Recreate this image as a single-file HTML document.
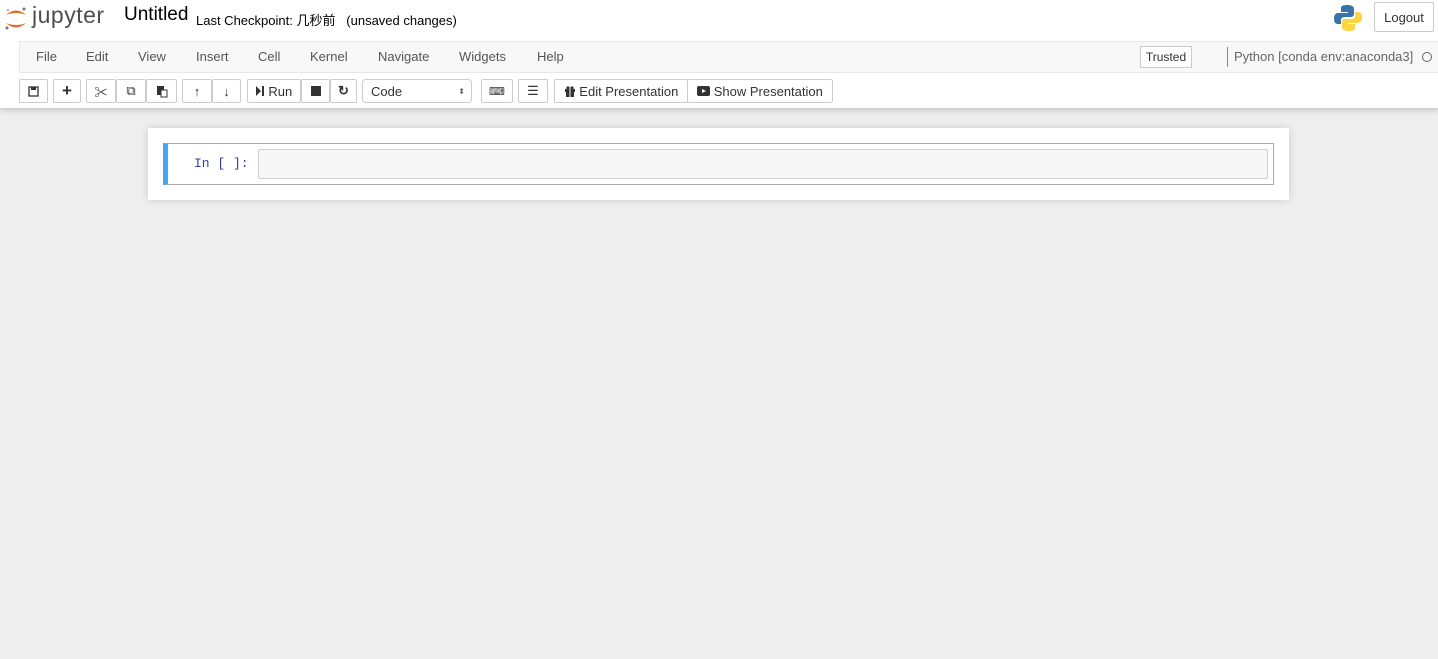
<!DOCTYPE html>
<html><head><meta charset="utf-8"><style>
*{box-sizing:border-box}
body{margin:0;width:1438px;height:659px;background:#eeeeee;font-family:"Liberation Sans","Noto Sans CJK SC",sans-serif;font-size:13px;color:#000;position:relative;overflow:hidden}
.abs{position:absolute}
#hdr{left:0;top:0;width:1438px;height:108px;background:#fff;box-shadow:0 2px 6px rgba(0,0,0,.2)}
#menu{left:19px;top:41px;width:1419px;height:32px;background:#f8f8f8;border-top:1px solid #e7e7e7;border-bottom:1px solid #e7e7e7;border-left:1px solid #e7e7e7}
.mi{position:absolute;top:7px;color:#555;font-size:13px}
.btn{position:absolute;top:79px;height:24px;border:1px solid #ccc;background:#fff;border-radius:2px;display:flex;align-items:center;justify-content:center;font-size:13px;color:#333}
</style></head><body>
<div id="hdr" class="abs"></div>
<svg class="abs" style="left:4px;top:6px" width="24" height="26" viewBox="0 0 24 26"><path d="M2 9 Q12 0 22 9 Q12 5 2 9Z" fill="#e46e2e"/><path d="M2 17 Q12 26 22 17 Q12 21 2 17Z" fill="#e46e2e"/><circle cx="20" cy="3" r="1.5" fill="#767677"/><circle cx="3" cy="22" r="1.5" fill="#767677"/><circle cx="4" cy="4" r="1" fill="#989798"/></svg>
<div class="abs" style="left:32px;top:2px;font-size:23px;color:#4e4e4e;letter-spacing:0.5px">jupyter</div>
<div class="abs" style="left:124px;top:4px;font-size:19px">Untitled</div>
<div class="abs" style="left:196px;top:10px;font-size:13px">Last Checkpoint: 几秒前 &nbsp; (unsaved changes)</div>
<svg class="abs" style="left:1333px;top:3px" width="30" height="30" viewBox="0 0 30 30"><path d="M14 2 C8 2 8 4 8 6 V9 H15 V10 H5 C2 10 1 13 1 16 C1 20 3 21 5 21 H8 V17 C8 15 10 14 12 14 H18 C20 14 21 12 21 11 V6 C21 3 18 2 14 2Z" fill="#3873a9"/><path d="M16 28 C22 28 22 26 22 24 V21 H15 V20 H25 C28 20 29 17 29 14 C29 10 27 9 25 9 H22 V13 C22 15 20 16 18 16 H12 C10 16 9 18 9 19 V24 C9 27 12 28 16 28Z" fill="#fdd444"/></svg>
<div class="abs" style="left:1374px;top:2px;width:60px;height:30px;border:1px solid #ccc;border-radius:2px;display:flex;align-items:center;justify-content:center;color:#333">Logout</div>
<div id="menu" class="abs">
<span class="mi" style="left:16px">File</span><span class="mi" style="left:66px">Edit</span><span class="mi" style="left:118px">View</span><span class="mi" style="left:176px">Insert</span><span class="mi" style="left:238px">Cell</span><span class="mi" style="left:290px">Kernel</span><span class="mi" style="left:358px">Navigate</span><span class="mi" style="left:439px">Widgets</span><span class="mi" style="left:517px">Help</span>
<span class="abs" style="left:1120px;top:4px;width:52px;height:22px;border:1px solid #ccc;background:#fff;display:flex;align-items:center;justify-content:center;color:#333;font-size:12px">Trusted</span>
<span class="abs" style="left:1207px;top:5px;height:20px;border-left:1px solid #888"></span>
<span class="mi" style="left:1214px;color:#666">Python [conda env:anaconda3]</span>
<span class="abs" style="left:1402px;top:10px;width:10px;height:10px;border:1.5px solid #666;border-radius:50%"></span>
</div>
<div class="btn" style="left:19px;width:29px"><svg width="11" height="11" viewBox="0 0 11 11"><rect x="1" y="1" width="9" height="9" fill="none" stroke="#333" stroke-width="1.3"/><rect x="3" y="1" width="5" height="3" fill="#333"/></svg></div>
<div class="btn" style="left:53px;width:28px;font-size:17px;font-weight:bold">+</div>
<div class="btn" style="left:86px;width:30px">✂</div>
<div class="btn" style="left:116px;width:30px">⧉</div>
<div class="btn" style="left:146px;width:31px"><svg width="12" height="13" viewBox="0 0 12 13"><rect x="1" y="1" width="7" height="9" fill="#333"/><rect x="5" y="5" width="6" height="7" fill="#fff" stroke="#333"/></svg></div>
<div class="btn" style="left:182px;width:30px;font-weight:bold">↑</div>
<div class="btn" style="left:212px;width:29px;font-weight:bold">↓</div>
<div class="btn" style="left:247px;width:54px"><svg width="9" height="10" viewBox="0 0 9 10"><path d="M0 0 L5 5 L0 10Z" fill="#333"/><rect x="6" y="0" width="2" height="10" fill="#333"/></svg>&nbsp;Run</div>
<div class="btn" style="left:301px;width:29px"><span style="width:10px;height:10px;background:#333;display:block"></span></div>
<div class="btn" style="left:330px;width:27px;font-weight:bold">↻</div>
<div class="btn" style="left:362px;width:110px;justify-content:space-between;padding:0 6px 0 8px;border-radius:4px">Code<span style="font-size:8px;color:#666">⬍</span></div>
<div class="btn" style="left:481px;width:32px;font-size:11px">⌨</div>
<div class="btn" style="left:518px;width:30px">☰</div>
<div class="btn" style="left:554px;width:134px"><svg width="12" height="11" viewBox="0 0 12 11"><rect x="1" y="3" width="10" height="3" fill="#333"/><rect x="2" y="6" width="8" height="5" fill="#333"/><rect x="5.5" y="3" width="1" height="8" fill="#fff"/><circle cx="4" cy="2" r="1.6" fill="#333"/><circle cx="8" cy="2" r="1.6" fill="#333"/></svg>&nbsp;Edit Presentation</div>
<div class="btn" style="left:687px;width:146px"><svg width="13" height="10" viewBox="0 0 13 10"><rect x="0" y="0" width="13" height="10" rx="2" fill="#333"/><path d="M5 3 L9 5 L5 7Z" fill="#fff"/></svg>&nbsp;Show Presentation</div>
<div class="abs" style="left:148px;top:128px;width:1141px;height:72px;background:#fff;box-shadow:0 0 8px rgba(0,0,0,.15)"></div>
<div class="abs" style="left:163px;top:143px;width:1111px;height:42px;border:1px solid #ababab;border-left:5px solid #42a5f5"></div>
<div class="abs" style="left:194px;top:156px;font-family:'Liberation Mono',monospace;font-size:13px;color:#303f9f">In [ ]:</div>
<div class="abs" style="left:258px;top:149px;width:1010px;height:30px;background:#f7f7f7;border:1px solid #cfcfcf;border-radius:2px"></div>
</body></html>
